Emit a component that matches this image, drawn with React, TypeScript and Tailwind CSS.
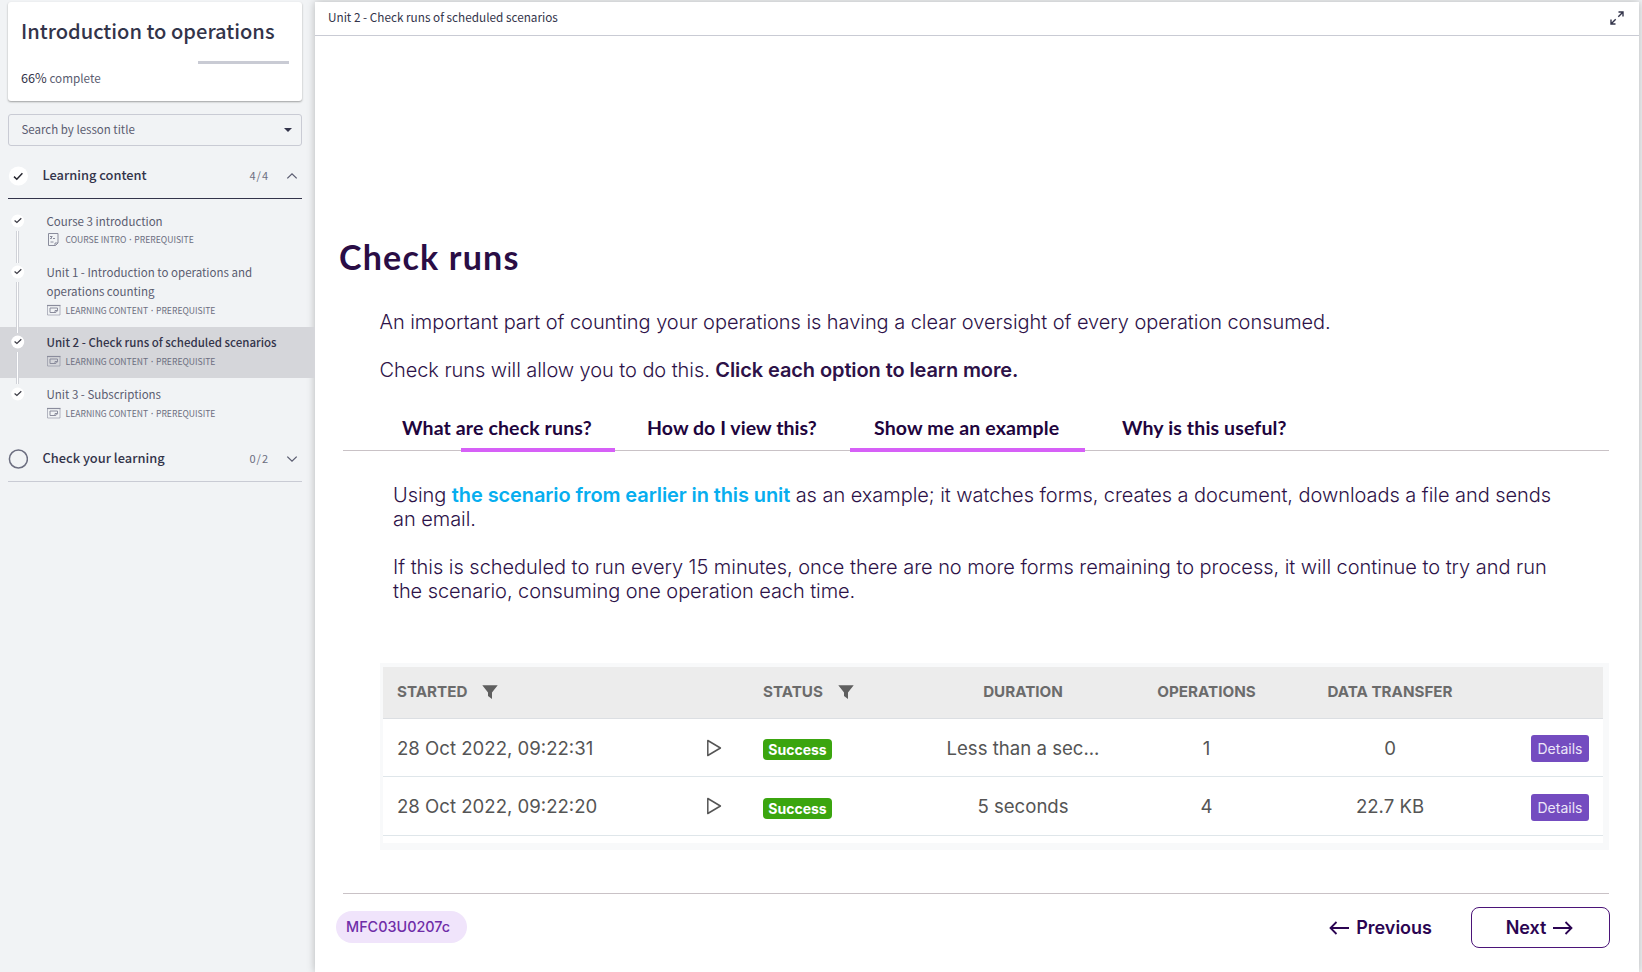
import React from "react";

const sans = "font-['Noto_Sans_CJK_SC','Noto_Sans',sans-serif]";
const inter = "font-['Inter','Liberation_Sans',sans-serif]";
const display = "font-['Lato','Inter',sans-serif]";

function CheckDot({ size }: { size: "sm" | "lg" }) {
  return size === "lg" ? (
    <svg viewBox="0 0 20 20" className="h-5 w-5 shrink-0">
      <circle cx="10.4" cy="10" r="9.6" fill="#fff" />
      <path d="M6 10.6l2.8 2.6 5.6-5.9" fill="none" stroke="#26262f" strokeWidth="1.5" />
    </svg>
  ) : (
    <svg viewBox="0 0 14 14" className="h-3.5 w-3.5 shrink-0">
      <circle cx="6.7" cy="7" r="6.5" fill="#fff" />
      <path d="M3.6 6.5l2.3 2L10.300 4.300" fill="none" stroke="#3a3a44" strokeWidth="1.2" />
    </svg>
  );
}

function Chevron({ up }: { up?: boolean }) {
  return (
    <svg viewBox="0 0 12 8" className="h-2 w-3 shrink-0">
      <path d={up ? "M1.3 6.4L6 1.8l4.7 4.6" : "M1.3 1.6L6 6.2l4.7-4.6"} fill="none" stroke="#5a5c70" strokeWidth="1.3" />
    </svg>
  );
}

function LessonIcon({ kind }: { kind: "doc" | "slide" }) {
  return kind === "doc" ? (
    <svg viewBox="0 0 14 14" className="h-3.5 w-3.5 shrink-0" fill="none" stroke="#8a8c9c">
      <path d="M1.500 .5h9.500v9.500l-2.500 2.500H1.500zM8 12.500V10h3" />
      <path d="M3 3.500h2.500M3 5.500h1.500M4.500 3.500v2M6 5.500h2M3.500 9h3" />
    </svg>
  ) : (
    <svg viewBox="0 0 14 14" className="h-3.5 w-3.5 shrink-0" fill="none" stroke="#8a8c9c">
      <path d="M.5 2.500h12.500v9.500H.5z" strokeOpacity=".6" />
      <path d="M0 2.500h13.500" strokeWidth="1.200" />
      <path d="M3 5h7.500v2.800L8.800 9.500H3zM8 9.500V7.500h2.500" />
    </svg>
  );
}

type Lesson = { title: string; kind: "doc" | "slide"; label: string; active?: boolean; last?: boolean };

const lessons: Lesson[] = [
  { title: "Course 3 introduction", kind: "doc", label: "COURSE INTRO" },
  { title: "Unit 1 - Introduction to operations and operations counting", kind: "slide", label: "LEARNING CONTENT" },
  { title: "Unit 2 - Check runs of scheduled scenarios", kind: "slide", label: "LEARNING CONTENT", active: true },
  { title: "Unit 3 - Subscriptions", kind: "slide", label: "LEARNING CONTENT", last: true },
];

function LessonRow({ l }: { l: Lesson }) {
  return (
    <li className={`relative flex pl-[10.5px] pb-2 ${l.active ? "bg-[#d5d6da]" : ""} ${l.last ? "pt-[7px]" : "pt-[6px]"}`}>
      <div className="pt-[2px]"><CheckDot size="sm" /></div>
      {!l.last && <span className="absolute left-4 top-[25px] -bottom-[6px] z-10 w-[3px] border-x border-[#d0d2d8] bg-white" />}
      <div className="ml-[22px] w-[240px]">
        <p className={`text-[11.5px] leading-[19px] ${l.active ? "font-medium text-[#33344a]" : "text-[#5a5c70]"}`}>{l.title}</p>
        <p className={`flex items-center gap-[5px] text-[8.6px] leading-[18px] text-[#6c6e80] ${l.last ? "h-[17px]" : "h-[18px]"}`}>
          <LessonIcon kind={l.kind} />
          <span className={l.kind === "doc" ? "pb-[2px]" : ""}>{l.label}<span className="font-['Noto_Sans'] text-[10px]"> · </span>PREREQUISITE</span>
        </p>
      </div>
    </li>
  );
}

function Filter() {
  return (
    <svg viewBox="0 0 16 14" className="h-3.5 w-4"><path d="M.3.3h15.4L10 7.500V14L6 11V7.500z" fill="#5f5f5f" /></svg>
  );
}

function Play() {
  return (
    <svg viewBox="0 0 16 18" className="h-[18px] w-4"><path d="M1.8 1.5L14.4 9 1.8 16.5z" fill="none" stroke="#555" strokeWidth="1.5" strokeLinejoin="round" /></svg>
  );
}

const rows = [
  { started: "28 Oct 2022, 09:22:31", duration: "Less than a sec...", ops: "1", data: "0" },
  { started: "28 Oct 2022, 09:22:20", duration: "5 seconds", ops: "4", data: "22.7 KB" },
];

const cols = "grid grid-cols-[309px_71px_168px_184px_183px_184px_1fr] items-center";

export default function App() {
  return (
    <div className={`flex h-[972px] w-[1642px] overflow-hidden bg-[#f1f3f5] ${sans}`}>
      <aside className="w-[315px] shrink-0 pt-[2px]">
        <div className="ml-2 h-[99px] w-[294px] rounded-[3px] bg-white px-[13px] shadow-[0_1px_2px_rgba(0,0,0,0.35)]">
          <h1 className="whitespace-nowrap pt-[13px] text-[20.1px] font-medium leading-8 text-[#33344a]">Introduction to operations</h1>
          <div className="mt-[14px] flex justify-end"><div className="h-[3px] w-[91px] bg-[#c9cbd4]" /></div>
          <p className="mt-1 text-[11.7px] leading-5 text-[#5a5c70]"><span className="text-[12.7px] text-[#33344a]">66%</span> complete</p>
        </div>
        <div className="ml-2 mt-[13px] flex h-8 w-[294px] items-center justify-between rounded-[3px] border border-[#c9cbd4] pl-[12.5px] pr-[9px] text-[11.5px] leading-5 text-[#5a5c70]">
          <span className="pb-[2px]">Search by lesson title</span>
          <svg viewBox="0 0 8 4" className="h-1 w-2"><path d="M0 0h8L4 4z" fill="#33344a" /></svg>
        </div>
        <div className="ml-2 flex h-[53px] w-[294px] items-center border-b border-[#33344a] pr-[4px] pt-[8px]">
          <CheckDot size="lg" />
          <span className="ml-[14.5px] flex-1 pb-[3px] text-[12.85px] font-medium leading-5 text-[#33344a]">Learning content</span>
          <span className="mr-[17px] pb-px text-[11px] tracking-[1px] text-[#6c6e80]">4/4</span>
          <Chevron up />
        </div>
        <ul className="pt-[7px]">{lessons.map((l) => <LessonRow key={l.title} l={l} />)}</ul>
        <div className="ml-2 flex h-[53px] w-[294px] items-center border-b border-[#c9cbd4] pr-[4px] pt-[8px]">
          <svg viewBox="0 0 20 20" className="h-5 w-5"><circle cx="10.4" cy="10" r="9" fill="none" stroke="#6c6e80" strokeWidth="1.5" /></svg>
          <span className="ml-[14.5px] flex-1 pb-[3px] text-[12.85px] font-medium leading-5 text-[#33344a]">Check your learning</span>
          <span className="mr-[17px] pb-px text-[11px] tracking-[1px] text-[#6c6e80]">0/2</span>
          <Chevron />
        </div>
      </aside>
      <main className="mt-[2px] flex w-[1324px] shrink-0 flex-col bg-white shadow-[0_0_8px_rgba(0,0,0,0.25)]">
        <header className="flex h-[34px] items-center justify-between border-b border-[#c9cbd4] pl-[13px] pr-[15px]">
          <span className="pb-[3px] text-[11.75px] leading-5 text-[#33344a]">Unit 2 - Check runs of scheduled scenarios</span>
          <svg viewBox="0 0 14 14" className="mb-[2px] h-3.5 w-3.5" fill="none" stroke="#33344a" strokeWidth="1.4"><path d="M8.5 1H13v4.500M13 1L8.300 5.700M5.500 13H1V8.500M1 13l4.700-4.700" /></svg>
        </header>
        <h2 className={`pl-6 pt-[201px] text-[34px] font-bold leading-10 tracking-[1.2px] text-[#2a0d45] ${display}`}>Check runs</h2>
        <div className={`pl-[64.5px] pt-[33px] text-[20px] font-light leading-6 tracking-[-0.05px] text-[#2d1248] ${inter}`}>
          <p>An important part of counting your operations is having a clear oversight of every operation consumed.</p>
          <p className="mt-6"><span className="tracking-[-0.07px]">Check runs will allow you to do this. </span><b className="font-semibold tracking-[-0.1px]">Click each option to learn more.</b></p>
        </div>
        <nav className={`relative ml-7 mt-[32px] flex h-[37px] w-[1266px] border-b border-[#c9c2c6] pl-[59px] pt-[2px] text-[19.5px] font-bold leading-6 tracking-[0.14px] text-[#21043d] ${display}`}>
          <span className="w-[245px]">What are check runs?</span>
          <span className="w-[227px] tracking-[0.06px]">How do I view this?</span>
          <span className="w-[248px]">Show me an example</span>
          <span>Why is this useful?</span>
          <i className="absolute left-[118px] top-[34px] h-1 w-[154px] bg-[#d660f7]" />
          <i className="absolute left-[507px] top-[34px] h-1 w-[235px] bg-[#d660f7]" />
        </nav>
        <div className={`pl-[78px] pt-[32px] text-[20px] font-light leading-6 tracking-[-0.05px] text-[#2d1248] ${inter}`}>
          <p>Using <b className="font-semibold tracking-[-0.11px] text-[#06aeef]">the scenario from earlier in this unit</b> as an example; it watches forms, creates a document, downloads a file and sends<br />an email.</p>
          <p className="mt-6"><span className="tracking-[-0.035px]">If this is scheduled to run every 15 minutes, once there are no more forms remaining to process, it will continue to try and run</span><br /><span className="tracking-[-0.07px]">the scenario, consuming one operation each time.</span></p>
        </div>
        <section className={`ml-[65px] mt-[60px] h-[187px] w-[1229px] shrink-0 bg-[#f8f9fa] pl-[3px] pr-[6px] pt-1 text-[#555] ${inter}`}>
          <div className="h-[176px] bg-white">
            <div className={`${cols} h-[52px] border-b border-[#dcdfe3] bg-[#ececec] pb-px text-[15.2px] font-bold text-[#6b6b6b]`}>
              <span className="flex items-center gap-[15px] pl-[14px]">STARTED<Filter /></span>
              <span />
              <span className="flex items-center gap-[15px]">STATUS<Filter /></span>
              <span className="text-center">DURATION</span>
              <span className="text-center">OPERATIONS</span>
              <span className="text-center">DATA TRANSFER</span>
            </div>
            {rows.map((r, i) => (
              <div key={r.started} className={`${cols} ${i === 0 ? "h-[58px]" : "h-[59px]"} border-b border-[#dfe6ea] text-[18.6px]`}>
                <span className="pl-[14px] pt-[2px]">{r.started}</span>
                <span className="pl-[14px]"><Play /></span>
                <span className="flex pt-[4px]"><span className="flex h-[21px] w-[69px] items-center justify-center rounded bg-[#3ba50f] text-[14px] font-bold text-white">Success</span></span>
                <span className="pt-[2px] text-center">{r.duration}</span>
                <span className="pt-[2px] text-center">{r.ops}</span>
                <span className="pt-[2px] text-center">{r.data}</span>
                <span className="flex justify-end pr-[14px] pt-[2px]"><span className="flex h-[27px] w-[58px] items-center justify-center rounded-[3px] bg-[#744cc0] text-[14px] text-[#ece6f8]">Details</span></span>
              </div>
            ))}
          </div>
        </section>
        <footer className={`ml-[21px] mt-[43px] flex w-[1274px] flex-col ${inter}`}>
          <hr className="ml-[7px] w-[1266px] border-[#c9c2c6]" />
          <div className="mt-[13px] flex h-[41px] items-center text-[#2b0452]">
            <span className="mb-[2px] flex h-8 w-[131px] items-center rounded-full bg-[#f0e4fb] pl-[10px] pt-px text-[14.4px] font-medium text-[#6f2da8]">MFC03U0207c</span>
            <span className="ml-auto flex items-center gap-[7px] text-[18px] font-semibold"><svg viewBox="0 0 20 14" className="h-3.5 w-5" fill="none" stroke="#2b0452" strokeWidth="1.8"><path d="M20 7H1.500M7.500 1L1.500 7l6 6" /></svg>Previous</span>
            <span className="ml-[39px] flex h-[41px] w-[139px] items-center justify-center gap-[7px] rounded-lg border-[1.5px] border-[#4b1478] pr-[2px] text-[18px] font-semibold tracking-[-0.1px]">Next<svg viewBox="0 0 20 14" className="h-3.5 w-5" fill="none" stroke="#2b0452" strokeWidth="1.8"><path d="M0 7h18.500M12.500 1l6 6-6 6" /></svg></span>
          </div>
        </footer>
      </main>
    </div>
  );
}
